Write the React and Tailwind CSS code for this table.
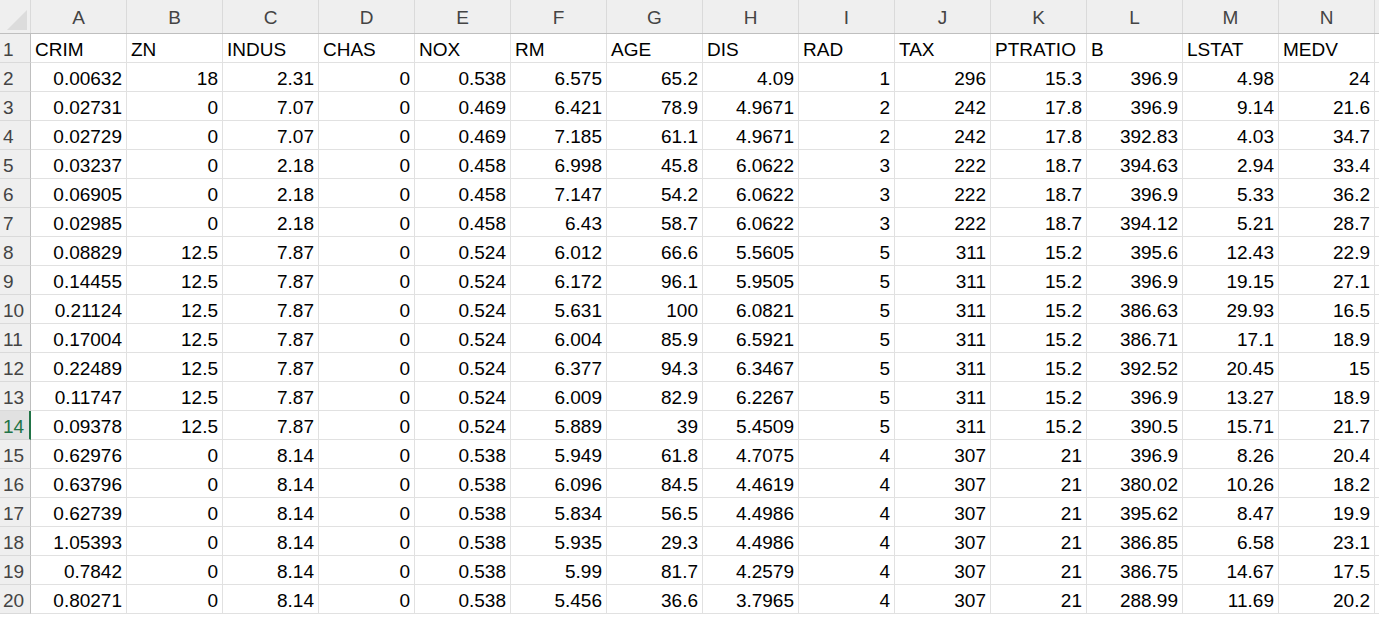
const columns = ['A', 'B', 'C', 'D', 'E', 'F', 'G', 'H', 'I', 'J', 'K', 'L', 'M', 'N'];

const headers = ['CRIM', 'ZN', 'INDUS', 'CHAS', 'NOX', 'RM', 'AGE', 'DIS', 'RAD', 'TAX', 'PTRATIO', 'B', 'LSTAT', 'MEDV'];

const rows = [
  ['0.00632', '18', '2.31', '0', '0.538', '6.575', '65.2', '4.09', '1', '296', '15.3', '396.9', '4.98', '24'],
  ['0.02731', '0', '7.07', '0', '0.469', '6.421', '78.9', '4.9671', '2', '242', '17.8', '396.9', '9.14', '21.6'],
  ['0.02729', '0', '7.07', '0', '0.469', '7.185', '61.1', '4.9671', '2', '242', '17.8', '392.83', '4.03', '34.7'],
  ['0.03237', '0', '2.18', '0', '0.458', '6.998', '45.8', '6.0622', '3', '222', '18.7', '394.63', '2.94', '33.4'],
  ['0.06905', '0', '2.18', '0', '0.458', '7.147', '54.2', '6.0622', '3', '222', '18.7', '396.9', '5.33', '36.2'],
  ['0.02985', '0', '2.18', '0', '0.458', '6.43', '58.7', '6.0622', '3', '222', '18.7', '394.12', '5.21', '28.7'],
  ['0.08829', '12.5', '7.87', '0', '0.524', '6.012', '66.6', '5.5605', '5', '311', '15.2', '395.6', '12.43', '22.9'],
  ['0.14455', '12.5', '7.87', '0', '0.524', '6.172', '96.1', '5.9505', '5', '311', '15.2', '396.9', '19.15', '27.1'],
  ['0.21124', '12.5', '7.87', '0', '0.524', '5.631', '100', '6.0821', '5', '311', '15.2', '386.63', '29.93', '16.5'],
  ['0.17004', '12.5', '7.87', '0', '0.524', '6.004', '85.9', '6.5921', '5', '311', '15.2', '386.71', '17.1', '18.9'],
  ['0.22489', '12.5', '7.87', '0', '0.524', '6.377', '94.3', '6.3467', '5', '311', '15.2', '392.52', '20.45', '15'],
  ['0.11747', '12.5', '7.87', '0', '0.524', '6.009', '82.9', '6.2267', '5', '311', '15.2', '396.9', '13.27', '18.9'],
  ['0.09378', '12.5', '7.87', '0', '0.524', '5.889', '39', '5.4509', '5', '311', '15.2', '390.5', '15.71', '21.7'],
  ['0.62976', '0', '8.14', '0', '0.538', '5.949', '61.8', '4.7075', '4', '307', '21', '396.9', '8.26', '20.4'],
  ['0.63796', '0', '8.14', '0', '0.538', '6.096', '84.5', '4.4619', '4', '307', '21', '380.02', '10.26', '18.2'],
  ['0.62739', '0', '8.14', '0', '0.538', '5.834', '56.5', '4.4986', '4', '307', '21', '395.62', '8.47', '19.9'],
  ['1.05393', '0', '8.14', '0', '0.538', '5.935', '29.3', '4.4986', '4', '307', '21', '386.85', '6.58', '23.1'],
  ['0.7842', '0', '8.14', '0', '0.538', '5.99', '81.7', '4.2579', '4', '307', '21', '386.75', '14.67', '17.5'],
  ['0.80271', '0', '8.14', '0', '0.538', '5.456', '36.6', '3.7965', '4', '307', '21', '288.99', '11.69', '20.2'],
];

const ACTIVE_ROW = 14;

const RowHeader = ({ n }) => {
  const active = n === ACTIVE_ROW;
  return (
    <div className={`w-[31px] h-[29px] shrink-0 flex items-end pb-[3px] pl-[3px] border-b ${
      active
        ? 'bg-[#e1e1e1] text-[#217346] border-b-[#d4d4d4] border-r-2 border-r-[#217346]'
        : 'bg-[#efefef] text-[#444] border-b-[#dadada] border-r border-r-[#bfbfbf]'
    }`}>
      {n}
    </div>
  );
};

const Cell = ({ children, left }) => (
  <div className={`w-[96px] h-[29px] shrink-0 flex items-end pb-[3px] border-r border-b border-[#e1e1e1] text-black ${
    left ? 'justify-start pl-[4px]' : 'justify-end pr-[4px]'
  }`}>
    {children}
  </div>
);

export default function App() {
  return (
    <div className="w-[1379px] h-[617px] overflow-hidden bg-white text-[19px] leading-none font-['Liberation_Sans',Arial,sans-serif]">
      {/* column letters */}
      <div className="flex h-[34px] bg-[#efefef] border-b border-[#bfbfbf]">
        <div className="w-[31px] shrink-0 flex items-end justify-end pr-[3px] pb-[3px] border-r border-[#dadada]">
          <div className="w-0 h-0 border-l-[20px] border-l-transparent border-b-[20px] border-b-[#dcdcdc]" />
        </div>
        {columns.map(c => (
          <div key={c} className="w-[96px] shrink-0 flex items-end justify-center pb-[6px] text-[#444] border-r border-[#dadada]">
            {c}
          </div>
        ))}
        <div className="flex-1" />
      </div>

      {/* header row */}
      <div className="flex">
        <RowHeader n={1} />
        {headers.map(h => <Cell key={h} left>{h}</Cell>)}
        <div className="flex-1 border-b border-[#e1e1e1]" />
      </div>

      {/* data */}
      {rows.map((r, i) => (
        <div key={i} className="flex">
          <RowHeader n={i + 2} />
          {r.map((v, j) => <Cell key={j}>{v}</Cell>)}
          <div className="flex-1 border-b border-[#e1e1e1]" />
        </div>
      ))}
    </div>
  );
}
